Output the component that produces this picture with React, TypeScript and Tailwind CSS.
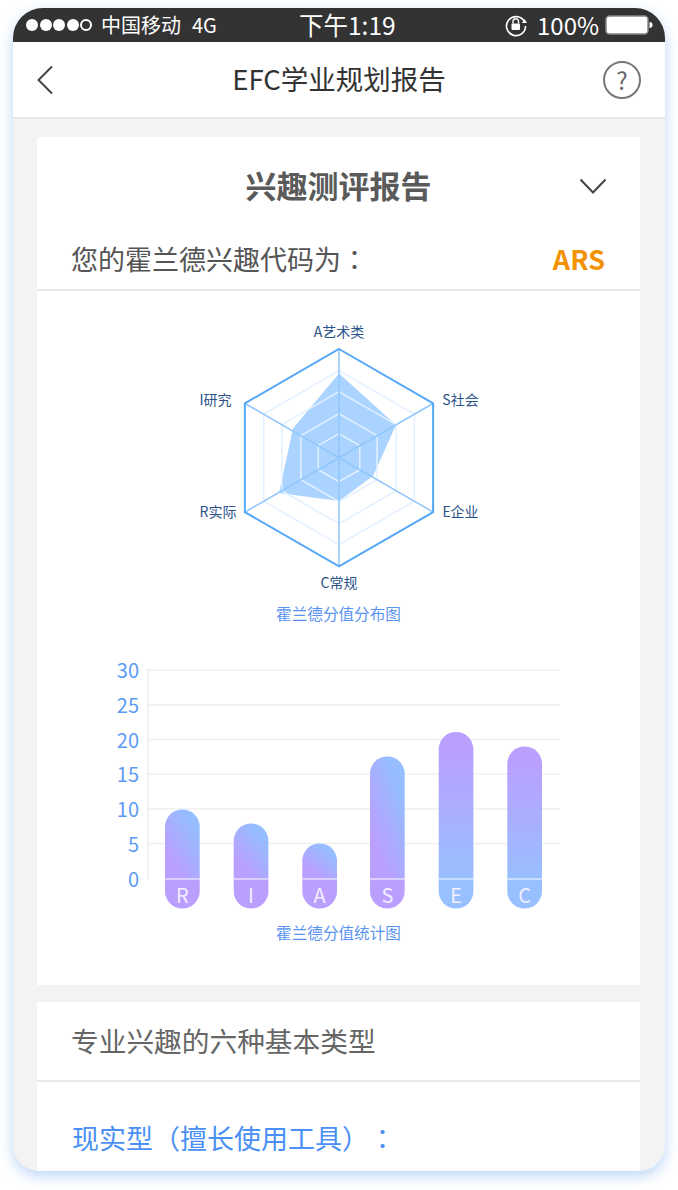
const cjk = "font-['Noto_Sans_CJK_SC',sans-serif] [text-spacing-trim:space-all]";

const bars = [
  { label: "R", x: 165, top: 809.5, g: "barUp", end: "#bb9fff" },
  { label: "I", x: 233.7, top: 823.5, g: "barUp", end: "#bb9fff" },
  { label: "A", x: 302.3, top: 843.5, g: "barUp", end: "#bb9fff" },
  { label: "S", x: 370, top: 756.5, g: "barUp", end: "#bb9fff" },
  { label: "E", x: 438.7, top: 732, g: "barDown", end: "#98bfff" },
  { label: "C", x: 507.3, top: 746.5, g: "barDown", end: "#98bfff" },
];

const gridY = [670, 704.7, 739.4, 774.1, 808.8, 843.5];
const ticks = ["30", "25", "20", "15", "10", "5", "0"];

// hexagon around the radar centre, r is the distance to the top corner
function hex(r: number) {
  const dx = r * 0.866;
  const dy = r * 0.5;
  const cx = 338;
  const cy = 457.7;
  return [
    [cx, cy - r],
    [cx + dx, cy - dy],
    [cx + dx, cy + dy],
    [cx, cy + r],
    [cx - dx, cy + dy],
    [cx - dx, cy - dy],
  ]
    .map((p) => p.join(","))
    .join(" ");
}

function Radar() {
  const labels = [
    { t: "A艺术类", x: 338, y: 336.5 },
    { t: "S社会", x: 459.5, y: 405 },
    { t: "E企业", x: 459.5, y: 517 },
    { t: "C常规", x: 338, y: 587.5 },
    { t: "R实际", x: 217, y: 517 },
    { t: "I研究", x: 214.5, y: 405 },
  ];
  return (
    <svg width="300" height="276" viewBox="188 320 300 276" className="mx-auto block">
      <polygon
        points="338,373.5 395,425 372,476 338,501 278,493 292,428.5"
        fill="#aad4ff"
      />
      {[24, 44, 66, 87].map((r) => (
        <polygon key={r} points={hex(r)} fill="none" stroke="#e3f0ff" strokeWidth="1.5" />
      ))}
      <g stroke="#8fc6fd" strokeWidth="1.5">
        <line x1="338" y1="349" x2="338" y2="566.7" />
        <line x1="244" y1="403.5" x2="432" y2="512" />
        <line x1="244" y1="512" x2="432" y2="403.5" />
      </g>
      <polygon points={hex(108.7)} fill="none" stroke="#55a8f8" strokeWidth="2" />
      {labels.map((l) => (
        <text key={l.t} x={l.x} y={l.y} textAnchor="middle" fontSize="14" fill="#2b5288">
          {l.t}
        </text>
      ))}
    </svg>
  );
}

function BarChart() {
  const w = 34.7;
  const r = w / 2;
  return (
    <svg width="480" height="265" viewBox="100 655 480 265" className="ml-[63px] block">
      <defs>
        <linearGradient id="barUp" x1="0.8" y1="0.2" x2="0.3" y2="0.85">
          <stop offset="0" stopColor="#95bdff" />
          <stop offset="1" stopColor="#bb9fff" />
        </linearGradient>
        <linearGradient id="barDown" x1="0" y1="0" x2="0" y2="1">
          <stop offset="0.1" stopColor="#bb9fff" />
          <stop offset="1" stopColor="#98bfff" />
        </linearGradient>
      </defs>
      <line x1="147.7" y1="670" x2="147.7" y2="879" stroke="#efefef" strokeWidth="1.5" />
      {gridY.map((y) => (
        <line key={y} x1="147" y1={y} x2="560" y2={y} stroke="#f0f0f0" strokeWidth="1.5" />
      ))}
      {ticks.map((t, i) => (
        <text key={t} x="139" y={678 + i * 34.8} textAnchor="end" fontSize="20" fill="#5b9bf5">
          {t}
        </text>
      ))}
      {bars.map((b) => (
        <g key={b.label}>
          <path
            d={`M${b.x} 879 V${b.top + r} a${r} ${r} 0 0 1 ${w} 0 V879 Z`}
            fill={`url(#${b.g})`}
          />
          <path
            d={`M${b.x} 879 H${b.x + w} V${908.5 - r} a${r} ${r} 0 0 1 ${-w} 0 Z`}
            fill={b.end}
          />
          <line
            x1={b.x}
            y1="879"
            x2={b.x + w}
            y2="879"
            stroke="#ffffff"
            strokeOpacity="0.65"
            strokeWidth="1.5"
          />
          <text
            x={b.x + r}
            y="902.5"
            textAnchor="middle"
            fontSize="20"
            fill="#f4efff"
          >
            {b.label}
          </text>
        </g>
      ))}
    </svg>
  );
}

function StatusBar() {
  return (
    <div className="flex h-[34px] items-center bg-[#333333] pl-[13px] text-white">
      <div className="flex items-center gap-[1.5px]">
        {[0, 1, 2, 3].map((i) => (
          <span key={i} className="h-[12px] w-[12px] rounded-full bg-white" />
        ))}
        <span className="h-[12px] w-[12px] rounded-full border-[2px] border-white" />
      </div>
      <span className="ml-[9px] w-[81px] text-[20px] leading-none">中国移动</span>
      <span className="ml-[10px] w-[27px] text-[20px] leading-none">4G</span>
      <span className="ml-[80px] w-[98px] text-[24.5px] leading-none whitespace-nowrap">下午1:19</span>
      <svg width="24" height="24" viewBox="0 0 24 24" className="ml-[107px]" fill="none" stroke="#fff">
        <path d="M20 8a9.5 9.5 0 1 0 1.5 5" strokeWidth="1.6" />
        <path d="M18 10h5l-2.5-4z" fill="#fff" stroke="none" />
        <rect x="7.5" y="10.5" width="8.5" height="6.5" fill="#fff" stroke="none" rx="1" />
        <path d="M9 10.5V8.5a2.7 2.7 0 0 1 5.5 0v2" strokeWidth="1.4" />
      </svg>
      <span className="ml-[9px] w-[60px] text-[24px] leading-none whitespace-nowrap">100%</span>
      <svg width="48" height="22" viewBox="0 0 48 22" className="ml-[8px]">
        <rect x="1" y="2" width="42" height="18" rx="3.5" fill="#fff" stroke="#888" strokeWidth="1.5" />
        <path d="M44.5 8v6a3 3 0 0 0 0-6z" fill="#fff" />
      </svg>
    </div>
  );
}

function NavBar() {
  return (
    <div className="relative flex h-[77px] items-center justify-between border-b-2 border-[#e6e6e6] bg-white pl-[23px] pr-[24px]">
      <svg width="18" height="30" viewBox="0 0 18 30" fill="none" stroke="#444" strokeWidth="2">
        <path d="M16 1.5 2.5 15 16 28.5" />
      </svg>
      <h1 className="mb-[2px] ml-[21px] text-[27.5px] leading-none text-[#333333]">EFC学业规划报告</h1>
      <div className="flex h-[38px] w-[38px] items-center justify-center rounded-full border-2 border-[#777777] text-[24px] leading-none text-[#666666]">
        ?
      </div>
    </div>
  );
}

export default function App() {
  return (
    <div className={`h-[1190px] w-full bg-white px-[13px] pt-[8px] ${cjk}`}>
      <div className="h-[1163px] w-[652px] overflow-hidden rounded-t-[30px] rounded-b-[26px] bg-[#f3f3f3] shadow-[0_5px_14px_rgba(90,150,235,0.4)]">
        <StatusBar />
        <NavBar />

        <div className="mt-[18px] ml-[24px] w-[603px] bg-white pb-[42px]">
          <div className="relative flex h-[101px] items-center justify-center pb-[6px]">
            <h2 className="text-[31px] leading-none font-bold text-[#5a5a5a]">兴趣测评报告</h2>
            <svg
              width="28"
              height="16"
              viewBox="0 0 28 16"
              fill="none"
              stroke="#444"
              strokeWidth="2"
              className="absolute top-[41px] right-[33px]"
            >
              <path d="M1.5 1.5 14 14.5 26.5 1.5" />
            </svg>
          </div>
          <div className="flex h-[53px] items-center justify-between border-b-2 border-[#e8e8e8] pr-[35px] pb-[10px] pl-[34px]">
            <span className="text-[27px] leading-none text-[#555555]">
              您的霍兰德兴趣代码为<span className="font-['Noto_Sans_CJK_TC',sans-serif]">：</span>
            </span>
            <span className="text-[27px] leading-none font-bold text-[#f39200]">ARS</span>
          </div>

          <div className="pt-[29px]">
            <Radar />
          </div>
          <p className="mt-[7px] text-center text-[15.6px] leading-[20px] text-[#5b94f0]">
            霍兰德分值分布图
          </p>
          <div className="mt-[32px]">
            <BarChart />
          </div>
          <p className="mt-[2px] mb-[1px] text-center text-[15.6px] leading-[20px] text-[#5b94f0]">
            霍兰德分值统计图
          </p>
        </div>

        <div className="mt-[17px] ml-[24px] h-[200px] w-[603px] bg-white">
          <div className="flex h-[80px] items-center border-b-2 border-[#e8e8e8] pl-[34px]">
            <span className="text-[27.7px] leading-none text-[#666666]">专业兴趣的六种基本类型</span>
          </div>
          <p className="pt-[42px] pl-[35px] text-[27px] leading-[28px] text-[#4a90f5]">
            现实型（擅长使用工具）<span className="font-['Noto_Sans_CJK_TC',sans-serif]">：</span>
          </p>
        </div>
      </div>
    </div>
  );
}
